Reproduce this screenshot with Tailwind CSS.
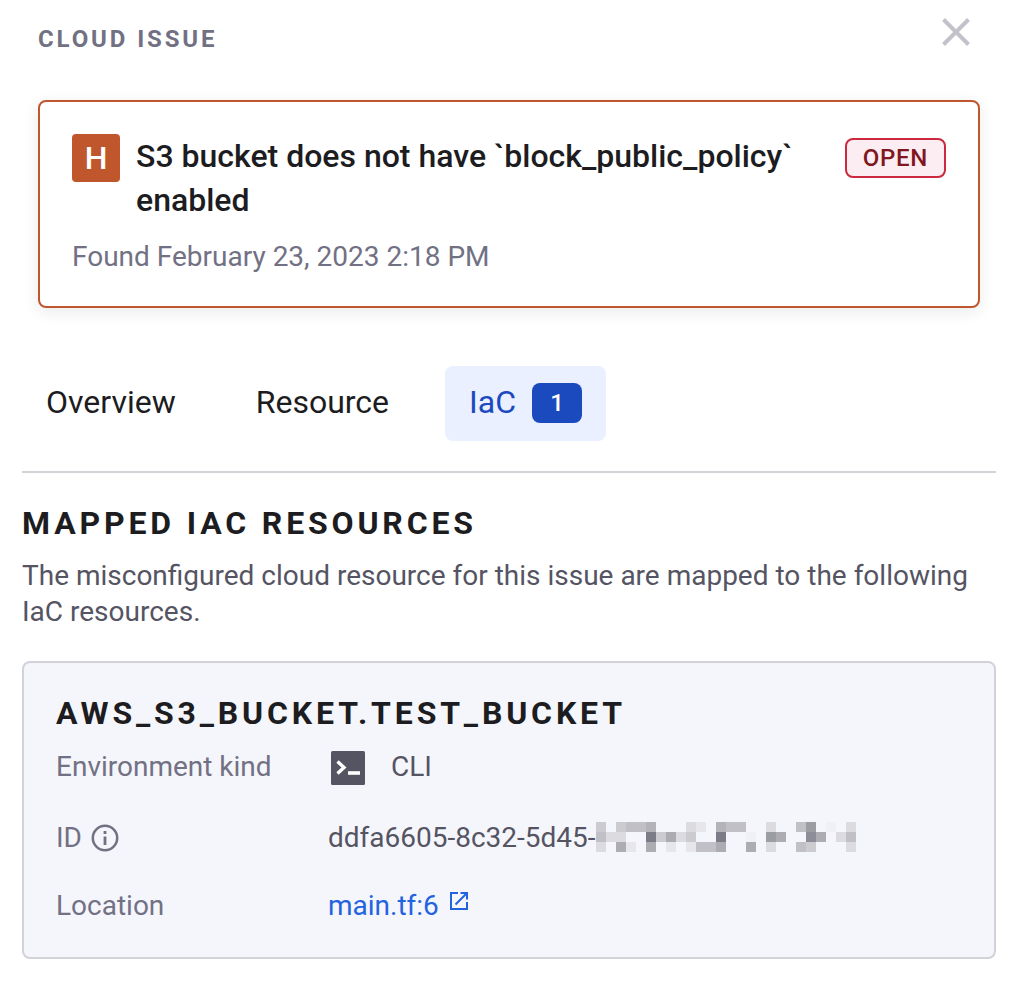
<!DOCTYPE html>
<html lang="en">
<head>
<meta charset="utf-8">
<meta name="viewport" content="width=device-width, initial-scale=1">
<title>Cloud issue</title>
<script src="https://cdn.jsdelivr.net/npm/@tailwindcss/browser@4"></script>
</head>
<body class="bg-white font-[Roboto,sans-serif] text-[28px] leading-9 text-[#1c1c21]">
<main class="pl-[22px] pr-4 pb-6">
  <header class="flex items-start justify-between pl-4 pr-[26px] pt-[18px]">
    <h2 class="pt-[3px] text-2xl leading-9 font-bold tracking-[0.12em] text-[#727184]">CLOUD ISSUE</h2>
    <button type="button" aria-label="Close" class="text-[#c3c2cb]">
      <svg class="block size-7" viewBox="0 0 28 28" fill="none" stroke="currentColor" stroke-width="4"><path d="M1.500 1.500 26.500 26.500M26.500 1.500 1.500 26.500"/></svg>
    </button>
  </header>

  <section class="mx-4 mt-[43px] rounded-lg border-2 border-[#c0562c] px-8 pt-8 pb-[31px] shadow-[0_4px_16px_rgba(28,28,33,0.09)]">
    <div class="flex items-start gap-4">
      <span class="flex size-12 shrink-0 items-center justify-center rounded bg-[#c0562c] text-[32px] font-medium text-white">H</span>
      <h1 class="flex-1 text-[32px] leading-11 font-medium">S3 bucket does not have `block_public_policy` enabled</h1>
      <span class="mt-1 flex h-10 shrink-0 items-center rounded-lg border-2 border-[#cb2a3e] bg-[#fcedf2] px-4 text-2xl font-medium tracking-[0.03em] text-[#80171f]">OPEN</span>
    </div>
    <p class="mt-[17px] text-[#727184]">Found February 23, 2023 2:18 PM</p>
  </section>

  <nav class="mt-[58px] flex items-center gap-8 border-b-2 border-[#d3d2d9] pb-[30px] text-[32px]" role="tablist">
    <button type="button" role="tab" aria-selected="false" class="h-[75px] rounded-lg px-6 pb-1">Overview</button>
    <button type="button" role="tab" aria-selected="false" class="h-[75px] rounded-lg px-6 pb-1">Resource</button>
    <button type="button" role="tab" aria-selected="true" class="flex h-[75px] items-center gap-4 rounded-lg bg-[#eaf0ff] px-6 pb-1 text-[#1b4abf]">IaC
      <span class="mt-0.5 flex h-10 w-[50px] items-center justify-center rounded-lg bg-[#1b4abf] text-2xl font-medium text-white">1</span>
    </button>
  </nav>

  <h2 class="mt-7 text-[32px] leading-11 font-bold tracking-[0.12em]">MAPPED IAC RESOURCES</h2>
  <p class="mt-[13px] text-[#555463]">The misconfigured cloud resource for this issue are mapped to the following IaC resources.</p>

  <section class="mt-[31px] rounded-lg border-2 border-[#d3d2d9] bg-[#f5f6fb] px-8 pt-7 pb-[33px]">
    <h3 class="text-[32px] leading-11 font-bold tracking-[0.12em]">AWS_S3_BUCKET.TEST_BUCKET</h3>
    <dl class="mt-[14px] grid grid-cols-[272px_1fr] gap-y-8 text-[#555463]">
      <dt class="text-[#727184]">Environment kind</dt>
      <dd class="flex items-center gap-[26px] pb-[3px] pl-[3px]">
        <svg class="mt-0.5 size-[34px]" viewBox="0 0 34 34"><rect width="34" height="34" rx="1.5" fill="#555463"/><path d="M6.500 10.500 13 16.500 6.500 22.500" fill="none" stroke="#fff" stroke-width="3.4"/><path d="M17 20.200h12v3.600H17z" fill="#fff"/></svg>
        CLI
      </dd>
      <dt class="flex items-center gap-2 text-[#727184]">ID
        <svg class="size-[30px]" viewBox="0 0 30 30" fill="none" stroke="currentColor" stroke-width="2.5"><circle cx="15" cy="15" r="12.2"/><path d="M15 13.500V22M15 8v3" stroke-width="2.8"/></svg>
      </dt>
      <dd class="flex items-center">ddfa6605-8c32-5d45-
        <svg class="mb-0.5 h-[30px] w-[260px]" viewBox="0 0 26 3" shape-rendering="crispEdges" aria-label="Redacted" role="img">
          <path fill="#cbcbd0" d="M0 0h1v1H0zM2 0h1v1H2zM6 1h1v1H6zM9 1h1v1H9zM21 2h1v1H21z"/>
          <path fill="#c1c0c7" d="M3 0h2v1H3zM13 0h2v1H13zM20 0h1v1H20zM0 1h1v1H0zM25 1h1v1H25zM10 2h2v1H10zM20 2h1v1H20z"/>
          <path fill="#b3b3b9" d="M5 0h1v1H5zM12 0h1v1H12z"/>
          <path fill="#dcdce0" d="M9 0h1v1H9zM17 0h1v1H17zM25 0h1v1H25zM1 1h2v1H1zM8 1h1v1H8zM24 1h1v1H24zM0 2h1v1H0zM17 2h1v1H17zM25 2h1v1H25z"/>
          <path fill="#e7e7eb" d="M10 0h1v1H10zM3 2h1v1H3zM7 2h1v1H7zM9 2h1v1H9z"/>
          <path fill="#9c9ca3" d="M21 0h1v1H21zM17 1h1v1H17z"/>
          <path fill="#f0f1f5" d="M23 0h1v1H23zM15 1h1v1H15z"/>
          <path fill="#7c7c88" d="M5 1h1v1H5zM12 1h1v1H12z"/>
          <path fill="#8d8d99" d="M21 1h1v1H21z"/>
          <path fill="#acacb2" d="M7 1h1v1H7zM18 1h1v1H18zM22 1h1v1H22zM2 2h1v1H2zM5 2h1v1H5zM12 2h1v1H12zM15 2h1v1H15z"/>
        </svg>
      </dd>
      <dt class="text-[#727184]">Location</dt>
      <dd class="flex"><a href="#main-tf" class="flex items-start gap-[11px] text-[#2463e0]">main.tf:6
        <svg class="mt-1 size-[18px]" viewBox="0 0 18 18" fill="none" stroke="currentColor" stroke-width="2"><path d="M8 1H1v16h16v-7M10.500 1H17v6.500M17 1 5.500 12.500"/></svg></a></dd>
    </dl>
  </section>
</main>
</body>
</html>
